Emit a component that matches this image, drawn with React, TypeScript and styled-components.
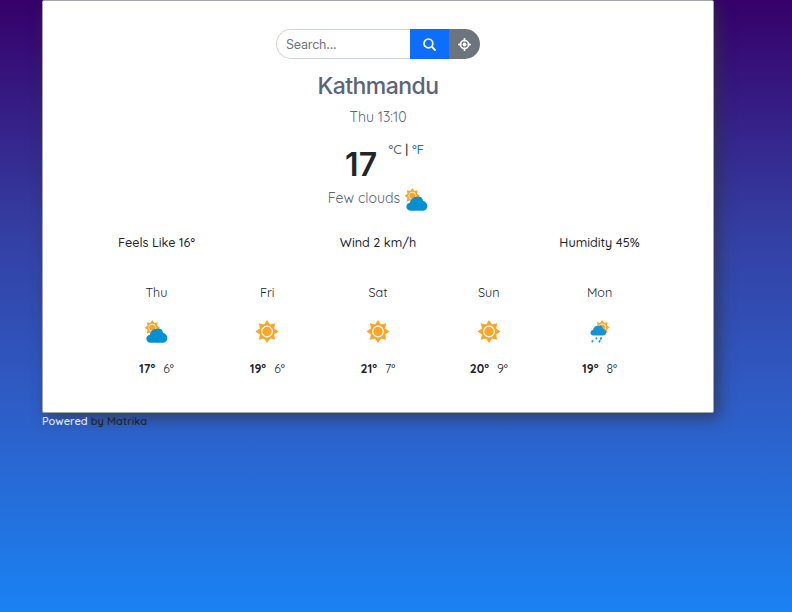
import React from "react";
import styled, { createGlobalStyle } from "styled-components";

const GlobalStyle = createGlobalStyle`
  *, *::before, *::after { box-sizing: border-box; }
  body {
    margin: 0;
    min-height: 100vh;
    background: linear-gradient(#36006a, #343fa3 38%, #2d5fc8 68%, #1a82f3);
    font-family: Quicksand, Lato, sans-serif;
    font-weight: 450;
    color: #212529;
    overflow: hidden;
  }
`;

const Page = styled.main`
  width: 672px;
  margin-left: 42px;
`;

const Card = styled.section`
  display: flex;
  flex-direction: column;
  align-items: center;
  height: 412.5px;
  padding-top: 28px;
  background: #fff;
  border: 1px solid #a3a5ac;
  border-radius: 2px;
  box-shadow: 5px 5px 15px rgba(50, 50, 60, 0.7);
`;

const SearchForm = styled.form`
  display: flex;
  width: 204px;
  height: 30px;
`;

const SearchInput = styled.input`
  width: 134px;
  height: 30px;
  padding: 0 9px;
  border: 1px solid #ced4da;
  border-right: 0;
  border-radius: 15px 0 0 15px;
  outline: 0;
  font: 12.5px Inter, sans-serif;
  letter-spacing: -0.2px;
  &::placeholder { color: #6c757d; opacity: 1; }
`;

const IconButton = styled.button<{ $tone: "primary" | "secondary" }>`
  display: flex;
  align-items: center;
  justify-content: center;
  width: ${(p) => (p.$tone === "primary" ? 39 : 31)}px;
  height: 30px;
  padding: 0;
  border: 0;
  border-radius: ${(p) => (p.$tone === "primary" ? "0" : "0 15px 15px 0")};
  background: ${(p) => (p.$tone === "primary" ? "#0d6efd" : "#6c757d")};
`;

const City = styled.h1`
  margin: 12px 0 0;
  font: 500 23px/30px Inter, sans-serif;
  letter-spacing: -0.55px;
  color: #5b6478;
`;

const LocalTime = styled.p`
  margin: 6px 0 0;
  font-size: 14.1px;
  line-height: 20px;
  color: #5b6478;
`;

const Current = styled.div`
  display: flex;
  width: 79px;
  height: 38px;
  margin: 14px 0 0 13px;
  justify-content: space-between;
`;

const Temperature = styled.strong`
  font: 600 32px/48px Inter, sans-serif;
  letter-spacing: 0.3px;
`;

const Units = styled.span`
  font-size: 13.2px;
  font-weight: 500;
  line-height: 16px;
  white-space: nowrap;
  color: #5b6478;
  b { font-weight: 500; color: #212529; }
  a { color: #0d6efd; }
`;

const Condition = styled.div`
  display: flex;
  height: 26px;
  margin-top: 6px;
  gap: 4px;
  font-size: 14.1px;
  line-height: 26px;
  color: #5b6478;
  svg { margin-top: 3px; }
`;

const Details = styled.div`
  display: flex;
  justify-content: space-between;
  width: 554px;
  margin-top: 21px;
  font-size: 12.6px;
  line-height: 20px;
`;

const Detail = styled.span`
  width: 111px;
  text-align: center;
  font-weight: 500;
`;

const Forecast = styled.div`
  display: grid;
  grid-template-columns: repeat(5, 1fr);
  width: 554px;
  margin-top: 30px;
`;

const Day = styled.div`
  display: flex;
  flex-direction: column;
  align-items: center;
  font-size: 12.6px;
  line-height: 20px;
  svg { margin: 18px 0 15px; }
`;

const Range = styled.div`
  display: flex;
  gap: 8px;
  font-size: 12.2px;
  line-height: 20px;
  strong { font-weight: 700; }
`;

const Footer = styled.footer`
  font-size: 11px;
  font-weight: 600;
  line-height: 17px;
  a { color: #dce6fb; }
`;

type Weather = "clouds" | "sun" | "rain";

const rays = (cx: number, cy: number, outer: number, inner: number) =>
  Array.from({ length: 16 }, (_, i) => {
    const a = (i * Math.PI) / 8 - Math.PI / 2;
    const r = i % 2 ? inner : outer;
    return `${(cx + r * Math.cos(a)).toFixed(2)},${(cy + r * Math.sin(a)).toFixed(2)}`;
  }).join(" ");

function Sun({ cx, cy, r }: { cx: number; cy: number; r: number }) {
  return (
    <>
      <polygon points={rays(cx, cy, r, r * 0.67)} fill="#ffa526" />
      <circle cx={cx} cy={cy} r={r * 0.46} fill="#ffa526" stroke="#fff" strokeWidth={r * 0.11} />
    </>
  );
}

function WeatherIcon({ kind }: { kind: Weather }) {
  return (
    <svg width="24" height="24" viewBox="0 0 24 24" aria-hidden="true">
      {kind === "sun" && <Sun cx={12} cy={11.5} r={11.5} />}
      {kind === "clouds" && (
        <>
          <Sun cx={8.3} cy={7.7} r={7.7} />
          <path d="M7 22.7C1 22.7 1 15.2 6 14.7C6.5 11.2 9.5 8.4 12.5 9C15.3 7.4 19 9.3 19 12.9C21.6 13.3 23.3 15.4 23.3 17.9C23.3 20.7 21.3 22.7 18.5 22.7Z" fill="#0390d2" />
        </>
      )}
      {kind === "rain" && (
        <>
          <Sun cx={14.2} cy={7.5} r={7.5} />
          <path d="M5.5 15.5C1.4 15.5 1.7 10.1 5 10C5.2 7.3 7.6 5.5 10 6.1C12.7 4.4 15 6.3 15 8.8C19.3 9.3 19.1 15.5 15 15.5Z" fill="#1793d2" />
          <path d="M8.5 18.2L8.4 18.5M13.1 18.1L12.7 18.9M4.5 21L4.3 21.4M11.7 21.1L11.4 21.7" stroke="#17a0df" strokeWidth="1.9" strokeLinecap="round" />
        </>
      )}
    </svg>
  );
}

function SearchIcon() {
  return (
    <svg width="13" height="13" viewBox="0 0 13 13" fill="none" stroke="#fff">
      <circle cx="5.4" cy="5.4" r="4.4" strokeWidth="1.7" />
      <path d="M8.7 8.7L12 12" strokeWidth="1.8" strokeLinecap="round" />
    </svg>
  );
}

function LocateIcon() {
  return (
    <svg width="13" height="13" viewBox="0 0 13 13" fill="none" stroke="#fff">
      <circle cx="6.5" cy="6.5" r="4" strokeWidth="1.6" />
      <circle cx="6.5" cy="6.5" r="1.9" fill="#fff" stroke="none" />
      <path d="M6.5 .8V2.5M6.5 10.5V12.2M.8 6.5H2.5M10.5 6.5H12.2" strokeWidth="1.8" strokeLinecap="round" />
    </svg>
  );
}

const forecast: { day: string; icon: Weather; high: number; low: number }[] = [
  { day: "Thu", icon: "clouds", high: 17, low: 6 },
  { day: "Fri", icon: "sun", high: 19, low: 6 },
  { day: "Sat", icon: "sun", high: 21, low: 7 },
  { day: "Sun", icon: "sun", high: 20, low: 9 },
  { day: "Mon", icon: "rain", high: 19, low: 8 },
];

export default function App() {
  return (
    <>
      <GlobalStyle />
      <Page>
        <Card>
          <SearchForm>
            <SearchInput placeholder="Search..." />
            <IconButton $tone="primary" type="button" aria-label="Search"><SearchIcon /></IconButton>
            <IconButton $tone="secondary" type="button" aria-label="Use my location"><LocateIcon /></IconButton>
          </SearchForm>
          <City>Kathmandu</City>
          <LocalTime>Thu 13:10</LocalTime>
          <Current>
            <Temperature>17</Temperature>
            <Units>°C <b>|</b> <a>°F</a></Units>
          </Current>
          <Condition>Few clouds <WeatherIcon kind="clouds" /></Condition>
          <Details>
            <Detail>Feels Like 16°</Detail>
            <Detail>Wind 2 km/h</Detail>
            <Detail>Humidity 45%</Detail>
          </Details>
          <Forecast>
            {forecast.map((d) => (
              <Day key={d.day}>
                {d.day}
                <WeatherIcon kind={d.icon} />
                <Range><strong>{d.high}°</strong><span>{d.low}°</span></Range>
              </Day>
            ))}
          </Forecast>
        </Card>
        <Footer><a>Powered</a> by Matrika</Footer>
      </Page>
    </>
  );
}
